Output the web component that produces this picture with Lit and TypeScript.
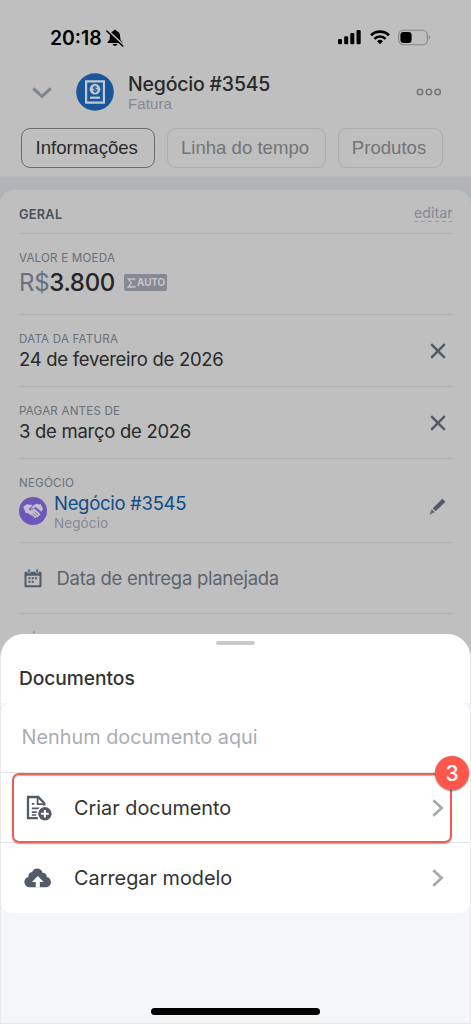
import { LitElement, html, css } from "lit";
import { customElement, property } from "lit/decorators.js";

const icons: Record<string, any> = {
  bell: html`<svg width="18" height="18" viewBox="0 0 18 18">
    <path d="M1.600 14v-1.300c1.800-1.200 2.100-2.300 2.200-4.800C3.900 4.500 5.200 2.500 7.500 2c.3-1.700 2.700-1.700 3 0 2.300.5 3.600 2.500 3.700 5.900.1 2.500.4 3.600 2.200 4.800V14z"/>
    <path d="M6.600 15h4.800c-.3 2.400-4.500 2.400-4.800 0z"/>
    <path d="M1.200 1.200 17.400 16.400" stroke="#bfbfbf" stroke-width="2.400"/>
    <path d="M.8 2 16.700 17" stroke="#000" stroke-width="1.500" stroke-linecap="round"/>
  </svg>`,
  signal: html`<svg width="24" height="16" viewBox="0 0 24 16">
    <rect x="0" y="10" width="4" height="5.200" rx="1.200"/><rect x="6.200" y="7.200" width="4" height="8" rx="1.200"/>
    <rect x="12.300" y="4" width="4" height="11.200" rx="1.200"/><rect x="18.500" y=".9" width="4.200" height="14.300" rx="1.200"/>
  </svg>`,
  wifi: html`<svg width="20" height="16" viewBox="0 0 20 16" fill="none" stroke="#000">
    <path d="M1.100 6.300a12.500 12.500 0 0 1 17.800 0" stroke-width="2.800"/>
    <path d="M4.400 9.900a7.900 7.900 0 0 1 11.200 0" stroke-width="2.600"/>
    <path d="M7.100 12.200a4.100 4.100 0 0 1 5.800 0L10 15.200z" fill="#000" stroke="none"/>
  </svg>`,
  battery: html`<svg width="33" height="17" viewBox="0 0 33 17">
    <rect x=".7" y="1.200" width="28.600" height="14.600" rx="4.600" fill="none" stroke="#868686" stroke-width="1.100"/>
    <rect x="2.400" y="3" width="11.200" height="11" rx="3.200"/>
    <path d="M30.600 6.300c1.700.6 1.700 3.800 0 4.400z" fill="#868686"/>
  </svg>`,
  down: html`<svg width="20" height="12" viewBox="0 0 20 12" fill="none"><path d="M1.300 1.300 10 9.500l8.700-8.200" stroke="#7f848e" stroke-width="3"/></svg>`,
  invoice: html`<svg width="38" height="38" viewBox="0 0 38 38">
    <circle cx="19" cy="19" r="18.800" fill="#1a579a"/>
    <path fill="#c0c8d2" fill-rule="evenodd" d="M9 7.200h20v23.600H9zM11.200 9.400v19.200h15.600V9.400z"/>
    <circle cx="19" cy="16.200" r="5.400" fill="#c0c8d2"/>
    <path d="M21 14.500c-.5-1-3.700-1.200-3.700.3s3.700.8 3.700 2.600c0 1.600-3.300 1.500-4 .2M19 12.400v7.600" fill="none" stroke="#1a579a" stroke-width="1.100"/>
    <path d="M14 23.600h10v2.200H14z" fill="#c0c8d2"/>
  </svg>`,
  dots: html`<svg width="26" height="8" viewBox="0 0 26 8" fill="none" stroke="#777" stroke-width="1.600">
    <circle cx="4" cy="4" r="2.700"/><circle cx="12.900" cy="4" r="2.700"/><circle cx="21.700" cy="4" r="2.700"/></svg>`,
  sigma: html`<svg width="9" height="10" viewBox="0 0 9 10" fill="none"><path d="M7.700 2.600V1H1.200l3.300 4-3.300 4h6.500V7.400" stroke="#c4c5c9" stroke-width="1.300"/></svg>`,
  cross: html`<svg width="16" height="16" viewBox="0 0 16 16" fill="none"><path d="m1.200 1.200 13.600 13.600M14.800 1.200 1.200 14.800" stroke="#525c69" stroke-width="2.500"/></svg>`,
  pencil: html`<svg width="17" height="17" viewBox="0 0 17 17" fill="#525c69"><path d="m13.400.7 3 3L6.700 13.300l-3-3zM2.700 11.300l3 3-5.100 2.100z"/><path d="m1.600 13 2.200 2.200" stroke="#bfbfbf" stroke-width=".6"/></svg>`,
  deal: html`<svg width="28" height="28" viewBox="0 0 28 28">
    <circle cx="14" cy="14" r="14" fill="#6d57b8"/>
    <path fill="#c3bfce" d="m4.200 9.800 4-2.800c1.200.8 2.400 1 3.700.6l1.700.7-3.600 3.600c.1 1.800 2.200 1.800 3.700.7l1.700-1 5.500 5c1.200 1.300-.2 2.700-1.500 1.800.6 1.400-.8 2.300-2 1.400.2 1.300-1.200 1.900-2.300 1l-6-4.600-2.500-.5z"/>
    <path fill="#c3bfce" d="m14.600 8.300 3-1.500 2.800.6 1.300-.5 2.400 5.400-1.500 1.600.1 1.200-6-5c-1.800.8-3.500 2.400-5 2.100z"/>
    <path d="m15.500 14.800 3.600 3.200m-5.300-1.600 3.400 2.900m-5-1.400 2.900 2.400" stroke="#6d57b8" stroke-width=".8"/>
  </svg>`,
  calendar: html`<svg width="18" height="19" viewBox="0 0 18 19" fill="#525c69">
    <path fill-rule="evenodd" d="M1.500 2.700h15Q17.500 2.700 17.500 3.700v13.600q0 1-1 1h-15q-1 0-1-1V3.700q0-1 1-1zM2.500 6.700v9.600h13V6.700z"/>
    <path d="M3.700 0h2.400v4H3.700zM11.900 0h2.400v4h-2.400z" stroke="#bfbfbf" stroke-width=".7"/>
    <path d="M7.700 8.300h2v2h-2zM10.900 8.300h2v2h-2zM4.500 11.800h2v2h-2zM7.700 11.800h2v2h-2zM4.500 8.300h2v2h-2z"/>
  </svg>`,
  create: html`<svg width="27" height="27" viewBox="0 0 27 27" fill="none">
    <path d="M12 23.200H2V2h10.300l6 6.200V12" stroke="#525c69" stroke-width="2.300"/>
    <path d="M11.600 2v7.200h7" stroke="#525c69" stroke-width="1.800"/>
    <path d="M5.800 8.900h2.500M5.800 13.400h7.800M5.800 17.100h5M5.800 20h4.500" stroke="#525c69" stroke-width="1.700"/>
    <circle cx="18.900" cy="18.700" r="8.100" fill="#fff"/><circle cx="18.900" cy="18.700" r="6.700" fill="#525c69"/>
    <path d="M18.900 14.900v7.600M15.100 18.700h7.600" stroke="#fff" stroke-width="2"/>
  </svg>`,
  upload: html`<svg width="28" height="20" viewBox="0 0 28 20">
    <path fill="#525c69" d="M6.200 19.300C2.600 19.300.4 17 .4 14c0-2.600 1.800-4.400 4-4.900C4 5.600 6.200 4 8 4.300 9 1.900 10.700.5 13 .5c3 0 5 1.800 5.500 4.300 2.600-.1 4.500 1.800 4.300 4.200 2.500.4 4.100 2.500 4.100 4.900 0 3.300-2.500 5.400-5.700 5.400z"/>
    <path fill="#fff" d="m13.800 8 5.800 5.900h-3.800v5.500h-4v-5.500H8z"/>
  </svg>`,
  next: html`<svg width="12" height="18" viewBox="0 0 12 18" fill="none"><path d="m1.300 1.300 8.300 7.700-8.300 7.700" stroke="#a5a9b1" stroke-width="2.700"/></svg>`,
};

@customElement("status-bar")
class StatusBar extends LitElement {
  static styles = css`
    :host { display: flex; height: 66px; padding: 29px 40.500px 0 50px; box-sizing: border-box; align-items: flex-start; }
    .time { font-size: 19.400px; font-weight: 600; line-height: 19px; letter-spacing: 0; color: #000; margin-right: 4px; }
    .grow { flex: 1; }
    .signal { margin-right: 7.500px; }
    .wifi { margin-right: 8px; }
    svg { display: block; }
  `;
  render() {
    return html`<span class="time">20:18</span><span>${icons.bell}</span><span class="grow"></span>
      <span class="signal">${icons.signal}</span><span class="wifi">${icons.wifi}</span><span>${icons.battery}</span>`;
  }
}

@customElement("page-header")
class PageHeader extends LitElement {
  static styles = css`
    :host { display: block; height: 110px; box-sizing: border-box; }
    .bar { display: flex; padding: 7px 29.500px 0 32px; height: 62px; box-sizing: border-box; align-items: flex-start; }
    svg { display: block; }
    .down { margin: 13.500px 24px 0 0; }
    .names { margin-left: 14px; flex: 1; }
    .title { font-size: 19.500px; font-weight: 500; line-height: 22px; color: #292929; letter-spacing: -.2px; }
    .sub { font: 15px/18px "Liberation Sans", sans-serif; color: #868991; letter-spacing: .1px; }
    .more { margin-top: 15px; }
    .tabs { display: flex; gap: 12px; padding-left: 21px; }
    .tab { height: 40px; border: 1.500px solid #adadad; border-radius: 9px; box-sizing: border-box; padding-right: 2px;
      font: 18.600px/38px "Liberation Sans", sans-serif; color: #747474; display: flex; justify-content: center; white-space: nowrap; }
    .info { width: 133.500px; border-color: #6c6c6c; color: #2a2a2a; }
    .line { width: 159px; }
    .prod { width: 105px; }
  `;
  render() {
    return html`<div class="bar"><span class="down">${icons.down}</span>${icons.invoice}
      <div class="names"><div class="title">Negócio #3545</div><div class="sub">Fatura</div></div>
      <span class="more">${icons.dots}</span></div>
      <div class="tabs"><div class="tab info">Informações</div><div class="tab line">Linha do tempo</div><div class="tab prod">Produtos</div></div>`;
  }
}

@customElement("detail-card")
class DetailCard extends LitElement {
  static styles = css`
    :host { display: block; background: #b0b4b6; border-top: 1px solid #b6b7ba; padding-top: 13px; height: 458px; box-sizing: border-box; }
    svg { display: block; }
    .card { background: #bfbfbf; border-radius: 14px 14px 0 0; padding: 0 18.500px 0 19px; height: 470px; }
    .row { border-bottom: 1px solid #b0b1b2; box-sizing: border-box; display: flex; justify-content: space-between; }
    .head { height: 44px; padding-top: 15px; }
    .geral { font-size: 12.700px; font-weight: 600; line-height: 19px; color: #48505b; letter-spacing: .3px; }
    .edit { font-size: 14.200px; line-height: 15px; height: 17px; color: #858992; letter-spacing: 0;
      background: repeating-linear-gradient(90deg, #999da3 0 4px, transparent 4px 7px) bottom / 100% 1px no-repeat; }
    .label { font-size: 11.600px; line-height: 14px; color: #69707a; letter-spacing: .2px; }
    .money { height: 81px; padding-top: 17px; }
    .sum { display: flex; align-items: center; font-size: 24px; line-height: 35px; font-weight: 500; color: #252525; letter-spacing: -.3px; }
    .cur { color: #69707a; font-weight: 400; }
    .auto { display: flex; align-items: center; gap: 1px; margin-left: 9px; width: 43px; height: 17px; border-radius: 2px; background: #868991;
      color: #c4c5c9; font-size: 10px; font-weight: 700; line-height: 17px; padding-left: 3px; box-sizing: border-box; letter-spacing: -.2px; }
    .date { height: 72px; padding-top: 17px; }
    .value { font-size: 18.500px; line-height: 27px; color: #292929; letter-spacing: -.28px; }
    .cross { margin: 11px 7px 0 0; }
    .deal { height: 84px; padding-top: 17px; }
    .who { display: flex; gap: 7px; }
    .face { margin-top: 7px; }
    .link { font-size: 18.500px; line-height: 27px; color: #124c87; letter-spacing: -.3px; }
    .kind { font-size: 13.500px; line-height: 12px; color: #858992; letter-spacing: .1px; }
    .pen { margin: 21.500px 6.500px 0 0; }
    .plan { height: 71px; justify-content: flex-start; align-items: center; gap: 14.500px; padding-left: 5px; font-size: 18.500px; color: #5d646e; letter-spacing: -.28px; }
    .next { padding-top: 18px; }
  `;
  dateRow(label: string, value: string) {
    return html`<div class="row date"><div><div class="label">${label}</div><div class="value">${value}</div></div><span class="cross">${icons.cross}</span></div>`;
  }
  render() {
    return html`<div class="card">
      <div class="row head"><span class="geral">GERAL</span><span class="edit">editar</span></div>
      <div class="row money"><div><div class="label">VALOR E MOEDA</div>
        <div class="sum"><span class="cur">R$</span><span class="num">3.800</span><span class="auto">${icons.sigma}<span>AUTO</span></span></div></div></div>
      ${this.dateRow("DATA DA FATURA", "24 de fevereiro de 2026")}
      ${this.dateRow("PAGAR ANTES DE", "3 de março de 2026")}
      <div class="row deal"><div><div class="label">NEGÓCIO</div><div class="who"><span class="face">${icons.deal}</span>
        <div><div class="link">Negócio #3545</div><div class="kind">Negócio</div></div></div></div><span class="pen">${icons.pencil}</span></div>
      <div class="row plan">${icons.calendar}<span>Data de entrega planejada</span></div>
      <div class="next label">MÉTODO DE PAGAMENTO</div>
    </div>`;
  }
}

@customElement("action-row")
class ActionRow extends LitElement {
  @property() icon = "";
  @property() label = "";
  static styles = css`
    :host { display: flex; align-items: center; height: 70px; padding: 0 26px 0 22.500px; box-sizing: border-box; }
    svg { display: block; }
    .icon { width: 50.500px; }
    .create { width: 48.500px; padding-left: 2px; }
    .text { flex: 1; font-size: 19.850px; color: #333; white-space: nowrap; }
  `;
  render() {
    return html`<span class="icon ${this.icon}">${icons[this.icon]}</span><span class="text">${this.label}</span>${icons.next}`;
  }
}

@customElement("document-sheet")
class DocumentSheet extends LitElement {
  static styles = css`
    :host { display: flex; flex-direction: column; height: 390px; box-sizing: border-box; background: #f5f6f8; border: 1px solid #e8e9ea; border-top: 0; border-radius: 24px 24px 0 0; overflow: hidden; }
    .head { height: 69px; background: #fff; box-sizing: border-box; padding: 6.500px 18px 0; }
    .grip { width: 39px; height: 4.500px; border-radius: 3px; background: #cacaca; margin: 0 auto; }
    .title { margin-top: 22.500px; font-size: 19.200px; line-height: 20px; font-weight: 550; color: #333; letter-spacing: -.05px; }
    .list { background: #fff; border-radius: 11px; }
    .empty { height: 70px; box-sizing: border-box; padding-left: 20.500px; line-height: 68px; font-size: 19.850px; color: #a8adb4; border-bottom: 1px solid #e3e4e6; }
    .first { position: relative; border-bottom: 1px solid #e3e4e6; height: 70px; box-sizing: border-box; }
    .frame { position: absolute; left: 11px; top: 0; width: 440px; height: 70px; border: 2px solid #e9605a; border-radius: 7px; box-sizing: border-box; box-shadow: 0 1px 1px #0005, inset 0 1px 1px #0004; }
    .badge { position: absolute; left: 434px; top: -17px; width: 34px; height: 34px; border-radius: 50%; background: #ff574b; color: #fff; font-size: 21px; font-weight: 500; line-height: 35px; text-align: center; box-shadow: 0 1px 2px #0007; }
    .foot { margin-top: auto; padding-bottom: 8.500px; }
    .home { width: 169px; height: 6.500px; border-radius: 4px; background: #000; margin: 0 auto; }
  `;
  render() {
    return html`<div class="head"><div class="grip"></div><div class="title">Documentos</div></div>
      <div class="list"><div class="empty">Nenhum documento aqui</div>
        <div class="first"><action-row icon="create" label="Criar documento"></action-row><div class="frame"></div><div class="badge">3</div></div>
        <action-row icon="upload" label="Carregar modelo"></action-row></div>
      <div class="foot"><div class="home"></div></div>`;
  }
}

@customElement("app-root")
class AppRoot extends LitElement {
  static styles = css`
    :host { display: flex; flex-direction: column; width: 471px; height: 1024px; overflow: hidden; background: #bfbfbf; font-family: Inter, "Liberation Sans", sans-serif; }
    document-sheet { z-index: 1; }
  `;
  render() {
    return html`<status-bar></status-bar><page-header></page-header><detail-card></detail-card><document-sheet></document-sheet>`;
  }
}
